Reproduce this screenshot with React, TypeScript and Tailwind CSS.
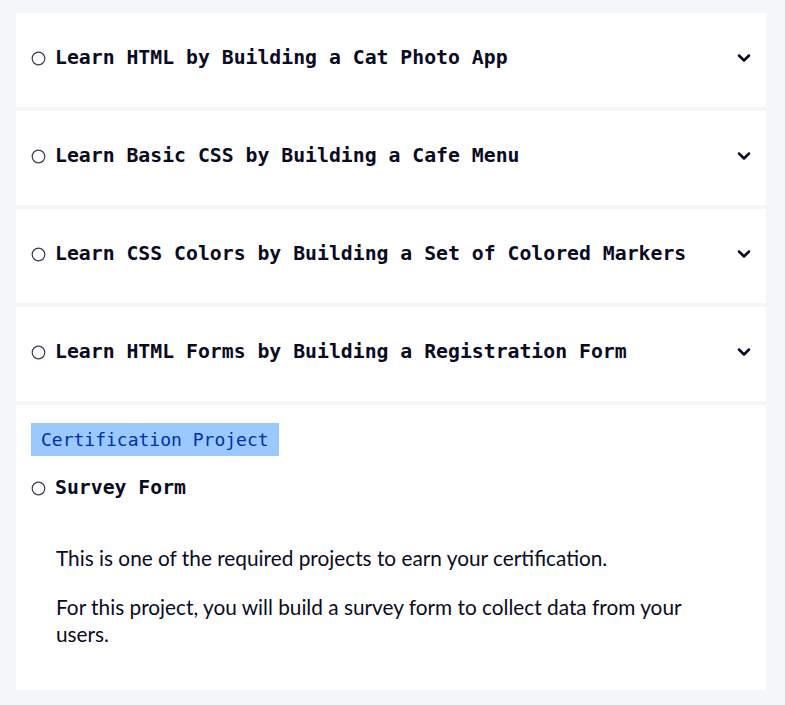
import { ChevronDown } from "lucide-react";

const mono = "font-['DejaVu_Sans_Mono','Liberation_Mono',monospace]";

const blocks = [
  "Learn HTML by Building a Cat Photo App",
  "Learn Basic CSS by Building a Cafe Menu",
  "Learn CSS Colors by Building a Set of Colored Markers",
  "Learn HTML Forms by Building a Registration Form",
];

function Ring() {
  return (
    <svg width="15" height="15" viewBox="0 0 15 15" className="shrink-0">
      <circle cx="7.5" cy="7.5" r="6.3" fill="none" stroke="#3b3b4f" strokeWidth="1.2" />
    </svg>
  );
}

export default function App() {
  return (
    <div className="min-h-[705px] bg-[#f5f6f7] pl-4 pr-[19px] pt-[13px] pb-4 text-[#0a0a23]">
      <div className="flex flex-col gap-[4px]">
        {blocks.map((title) => (
          <div key={title} className="flex h-[94px] items-center justify-between bg-white pb-[4px] pl-[15px] pr-[12px]">
            <div className="flex items-center gap-[9px]">
              <Ring />
              <span className={`${mono} text-[19.8px] font-bold`}>{title}</span>
            </div>
            <ChevronDown size={20} strokeWidth={3} className="text-[#0a0a23]" />
          </div>
        ))}

        <div className="bg-white px-[15px] pt-[18px] pb-[43px]">
          <span className={`${mono} inline-flex h-[33px] items-center bg-[#99c9ff] px-[10px] text-[18px] text-[#002ead]`}>
            Certification Project
          </span>
          <div className="mt-[17px] flex h-[30px] items-center gap-[9px]">
            <Ring />
            <span className={`${mono} text-[19.8px] font-bold`}>Survey Form</span>
          </div>
          <div className="mt-[41px] flex flex-col gap-[22px] px-[25px] font-['Lato',sans-serif] text-[20.8px] leading-[27px]">
            <p>This is one of the required projects to earn your certification.</p>
            <p>For this project, you will build a survey form to collect data from your users.</p>
          </div>
        </div>
      </div>
    </div>
  );
}
